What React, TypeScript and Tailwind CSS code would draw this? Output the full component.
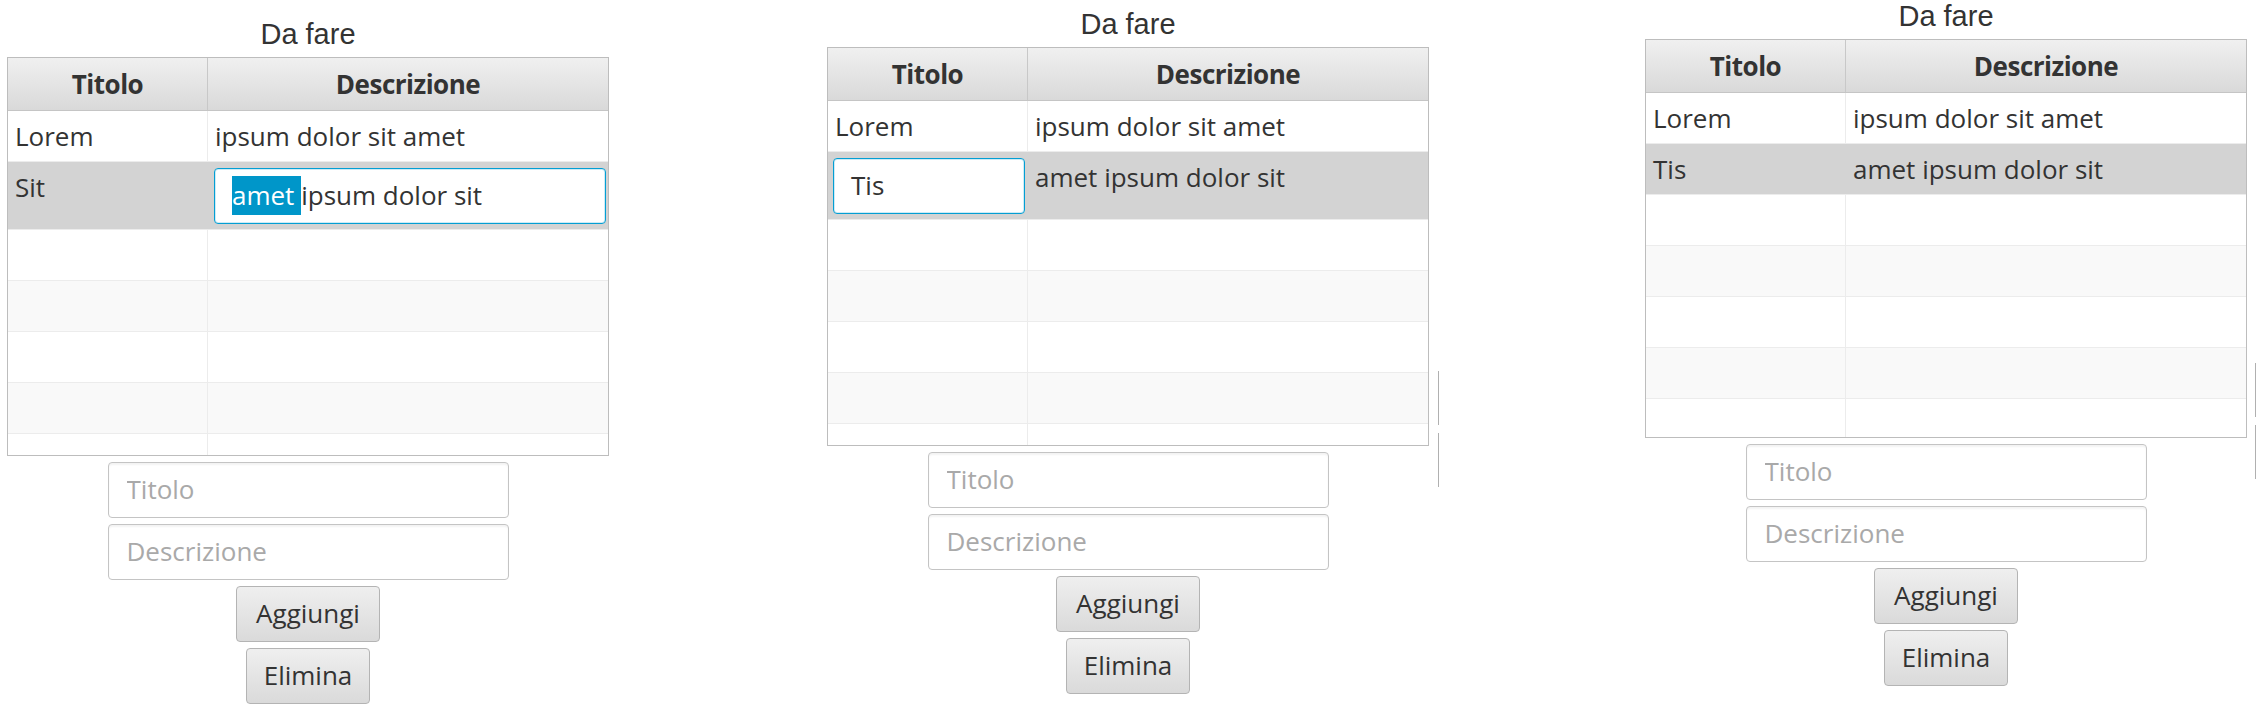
import React from "react";

type Row = { titolo: string; descrizione: string };

type PanelProps = {
    rows: Row[];
    editing: "titolo" | "descrizione" | null;
    className: string;
    lineClass?: string;
};

const BODY_FONT = "font-['Open_Sans',sans-serif] text-[26px] text-[#333333]";

function EditField({ text, selected }: { text: string; selected?: string }) {
    return (
        <div className="h-[56px] w-full flex items-center pl-[17px] bg-white border border-[#039ed3] rounded-[4px] shadow-[inset_0_0_0_1px_#cdebf6]">
            {selected && (
                <span className="inline-block h-[39px] leading-[39px] bg-[#0096c9] text-white">{selected}&nbsp;</span>
            )}
            <span className="leading-[39px] whitespace-pre">{text}</span>
        </div>
    );
}

function TableRow({ index, row, editing }: { index: number; row: Row | null; editing: PanelProps["editing"] }) {
    const selected = index === 1;
    const tall = selected && editing !== null;
    const bg = selected ? "bg-[#d3d3d3]" : index % 2 === 1 ? "bg-[#f9f9f9]" : "bg-white";

    return (
        <div className={`flex shrink-0 border-b border-[#ececec] ${bg} ${tall ? "h-[68px]" : "h-[51px]"}`}>
            <div
                className={`w-[200px] shrink-0 flex border-r ${selected ? "border-[#d3d3d3]" : "border-[#ececec]"} ${
                    tall && editing === "titolo" ? "items-center pl-[5px] pr-[2px]" : tall ? "items-start pt-[7px] pl-[7px]" : "items-center pl-[7px]"
                }`}
            >
                {row && (tall && editing === "titolo" ? <EditField text={row.titolo} /> : <span className="leading-[36px]">{row.titolo}</span>)}
            </div>
            <div
                className={`flex-1 flex ${
                    tall && editing === "descrizione" ? "items-center pl-[6px] pr-[2px]" : tall ? "items-start pt-[7px] pl-[7px]" : "items-center pl-[7px]"
                }`}
            >
                {row &&
                    (tall && editing === "descrizione" ? (
                        <EditField selected="amet" text="ipsum dolor sit" />
                    ) : (
                        <span className="leading-[36px]">{row.descrizione}</span>
                    ))}
            </div>
        </div>
    );
}

function Panel({ rows, editing, className, lineClass }: PanelProps) {
    const filled: (Row | null)[] = [...rows, null, null, null, null, null, null];

    return (
        <div className="flex items-start shrink-0">
            <div className={`w-[602px] flex flex-col items-center ${className}`}>
                <div className="h-[30px] leading-[30px] mb-[8px] text-[29px] font-['Liberation_Sans',Arial,sans-serif] text-[#333333]">
                    Da fare
                </div>

                <div className={`flex flex-col gap-[6px] items-center ${BODY_FONT}`}>
                    {/* tabella */}
                    <div className="w-[602px] h-[399px] border border-[#bdbdbd] bg-white flex flex-col overflow-hidden">
                        <div className="flex h-[53px] shrink-0 border-b border-[#c5c5c5] bg-linear-to-b from-[#f0f0f0] to-[#d9d9d9] font-bold tracking-[-0.5px]">
                            <div className="w-[200px] shrink-0 flex items-center justify-center border-r border-[#c8c8c8]">Titolo</div>
                            <div className="flex-1 flex items-center justify-center">Descrizione</div>
                        </div>
                        {filled.map((row, i) => (
                            <TableRow key={i} index={i} row={row} editing={editing} />
                        ))}
                    </div>

                    <input
                        placeholder="Titolo"
                        className="w-[401px] h-[56px] pl-[18px] pb-[3px] bg-white border border-[#c4c4c4] rounded-[4px] shadow-[inset_0_2px_2px_rgba(0,0,0,0.05)] outline-none placeholder:text-[#a9a9a9]"
                    />
                    <input
                        placeholder="Descrizione"
                        className="w-[401px] h-[56px] pl-[18px] pb-[3px] bg-white border border-[#c4c4c4] rounded-[4px] shadow-[inset_0_2px_2px_rgba(0,0,0,0.05)] outline-none placeholder:text-[#a9a9a9]"
                    />
                    <button className="h-[56px] px-[19px] pb-[2px] border border-[#b4b4b4] rounded-[4px] bg-linear-to-b from-[#efefef] to-[#dadada] text-[#333333]">
                        Aggiungi
                    </button>
                    <button className="h-[56px] px-[17px] pb-[2px] border border-[#b4b4b4] rounded-[4px] bg-linear-to-b from-[#efefef] to-[#dadada] text-[#333333]">
                        Elimina
                    </button>
                </div>
            </div>

            {lineClass && (
                <div className={`flex flex-col gap-[8px] w-px ${lineClass}`}>
                    <div className="h-[54px] w-px bg-[#b0b0b0]" />
                    <div className="h-[54px] w-px bg-[#b0b0b0]" />
                </div>
            )}
        </div>
    );
}

export default function App() {
    const lorem: Row = { titolo: "Lorem", descrizione: "ipsum dolor sit amet" };

    return (
        <div className="w-[2259px] h-[715px] bg-white flex items-start overflow-hidden">
            <div className="ml-[7px]">
                <Panel rows={[lorem, { titolo: "Sit", descrizione: "amet ipsum dolor sit" }]} editing="descrizione" className="pt-[19px]" />
            </div>
            <div className="ml-[218px]">
                <Panel
                    rows={[lorem, { titolo: "Tis", descrizione: "amet ipsum dolor sit" }]}
                    editing="titolo"
                    className="pt-[9px]"
                    lineClass="ml-[9px] mt-[371px]"
                />
            </div>
            <div className="ml-[206px]">
                <Panel
                    rows={[lorem, { titolo: "Tis", descrizione: "amet ipsum dolor sit" }]}
                    editing={null}
                    className="pt-[1px]"
                    lineClass="ml-[8px] mt-[363px]"
                />
            </div>
        </div>
    );
}
